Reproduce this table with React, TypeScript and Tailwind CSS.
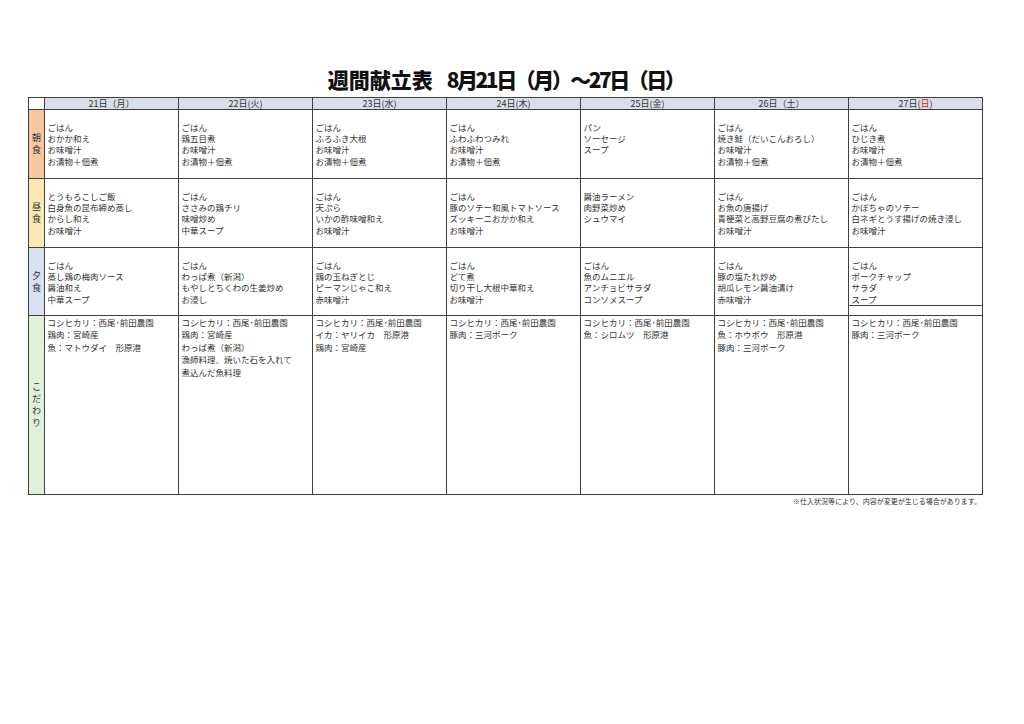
const days = [
  { d: '21日', w: '（月）' },
  { d: '22日', w: '(火)' },
  { d: '23日', w: '(水)' },
  { d: '24日', w: '(木)' },
  { d: '25日', w: '(金)' },
  { d: '26日', w: '（土）' },
  { d: '27日', w: '(日)', red: true },
];

const breakfast = [
  ['ごはん', 'おかか和え', 'お味噌汁', 'お漬物＋佃煮'],
  ['ごはん', '鶏五目煮', 'お味噌汁', 'お漬物＋佃煮'],
  ['ごはん', 'ふろふき大根', 'お味噌汁', 'お漬物＋佃煮'],
  ['ごはん', 'ふわふわつみれ', 'お味噌汁', 'お漬物＋佃煮'],
  ['パン', 'ソーセージ', 'スープ'],
  ['ごはん', '焼き鮭（だいこんおろし）', 'お味噌汁', 'お漬物＋佃煮'],
  ['ごはん', 'ひじき煮', 'お味噌汁', 'お漬物＋佃煮'],
];

const lunch = [
  ['とうもろこしご飯', '白身魚の昆布締め蒸し', 'からし和え', 'お味噌汁'],
  ['ごはん', 'ささみの鶏チリ', '味噌炒め', '中華スープ'],
  ['ごはん', '天ぷら', 'いかの酢味噌和え', 'お味噌汁'],
  ['ごはん', '豚のソテー和風トマトソース', 'ズッキーニおかか和え', 'お味噌汁'],
  ['醤油ラーメン', '肉野菜炒め', 'シュウマイ'],
  ['ごはん', 'お魚の唐揚げ', '青梗菜と高野豆腐の煮びたし', 'お味噌汁'],
  ['ごはん', 'かぼちゃのソテー', '白ネギとうす揚げの焼き浸し', 'お味噌汁'],
];

const dinner = [
  ['ごはん', '蒸し鶏の梅肉ソース', '醤油和え', '中華スープ'],
  ['ごはん', 'わっぱ煮（新潟）', 'もやしとちくわの生姜炒め', 'お浸し'],
  ['ごはん', '鶏の玉ねぎとじ', 'ピーマンじゃこ和え', '赤味噌汁'],
  ['ごはん', 'どて煮', '切り干し大根中華和え', 'お味噌汁'],
  ['ごはん', '魚のムニエル', 'アンチョビサラダ', 'コンソメスープ'],
  ['ごはん', '豚の塩たれ炒め', '胡瓜レモン醤油漬け', '赤味噌汁'],
  ['ごはん', 'ポークチャップ', 'サラダ', 'スープ'],
];

const kodawari = [
  ['コシヒカリ：西尾･前田農園', '鶏肉：宮崎産', '魚：マトウダイ　形原港'],
  ['コシヒカリ：西尾･前田農園', '鶏肉：宮崎産', 'わっぱ煮（新潟）', '漁師料理、焼いた石を入れて', '煮込んだ魚料理'],
  ['コシヒカリ：西尾･前田農園', 'イカ：ヤリイカ　形原港', '鶏肉：宮崎産'],
  ['コシヒカリ：西尾･前田農園', '豚肉：三河ポーク'],
  ['コシヒカリ：西尾･前田農園', '魚：シロムツ　形原港'],
  ['コシヒカリ：西尾･前田農園', '魚：ホウボウ　形原港', '豚肉：三河ポーク'],
  ['コシヒカリ：西尾･前田農園', '豚肉：三河ポーク'],
];

function Label({ chars, bg }: { chars: string[]; bg: string }) {
  return (
    <div className={`${bg} flex flex-col items-center justify-center text-[9px] leading-[12px] text-[#333]`}>
      {chars.map((c, i) => (
        <span key={i}>{c}</span>
      ))}
    </div>
  );
}

function MealCell({ lines, split }: { lines: string[]; split?: boolean }) {
  return (
    <div className="relative bg-white pt-[11.5px] pl-[2.5px] text-[8.5px] leading-[11.4px] text-[#333] whitespace-nowrap">
      {lines.map((l, i) => (
        <div key={i}>{l}</div>
      ))}
      {/* sunday dinner has an extra ruled line near the bottom */}
      {split && <div className="absolute left-0 right-0 bottom-[9px] h-px bg-[#3f3f3f]" />}
    </div>
  );
}

export default function App() {
  return (
    <div className="w-[1024px] h-[724px] bg-white font-['Noto_Sans_CJK_JP',sans-serif] text-[#333]">
      <div className="ml-[28px] w-[955px] pt-[67px]">
        <h1 className="text-center text-[21px] leading-[24px] font-black text-[#111]">
          週間献立表<span className="ml-[14px] tracking-[-2.5px]">8月21日（月）～27日（日）</span>
        </h1>

        <div className="mt-[6px] grid grid-cols-[15px_repeat(7,133px)] grid-rows-[11px_68px_68px_67px_178px] gap-px bg-[#3f3f3f] border border-[#3f3f3f]">
          {/* header */}
          <div className="bg-white" />
          {days.map((d) => (
            <div key={d.d} className="bg-[#d9dee8] flex items-center justify-center text-[9px] leading-[11px] text-[#333]">
              {d.d}
              {d.red ? (
                <span>
                  (<span className="text-[#e02020]">日</span>)
                </span>
              ) : (
                d.w
              )}
            </div>
          ))}

          {/* 朝食 */}
          <Label chars={['朝', '食']} bg="bg-[#f6c6a1]" />
          {breakfast.map((b, i) => (
            <MealCell key={i} lines={b} />
          ))}

          {/* 昼食 */}
          <Label chars={['昼', '食']} bg="bg-[#fce8b5]" />
          {lunch.map((b, i) => (
            <MealCell key={i} lines={b} />
          ))}

          {/* 夕食 */}
          <Label chars={['夕', '食']} bg="bg-[#d9e0f2]" />
          {dinner.map((b, i) => (
            <MealCell key={i} lines={b} split={i === 6} />
          ))}

          {/* こだわり */}
          <Label chars={['こ', 'だ', 'わ', 'り']} bg="bg-[#e2efda]" />
          {kodawari.map((k, i) => (
            <div key={i} className="bg-white pl-[2.5px] text-[8.5px] leading-[12.4px] text-[#333] whitespace-nowrap">
              {k.map((l, j) => (
                <div key={j}>{l}</div>
              ))}
            </div>
          ))}
        </div>

        <p className="mt-[1px] pr-[2px] text-right text-[7px] leading-[10px] text-[#333]">
          ※仕入状況等により、内容が変更が生じる場合があります。
        </p>
      </div>
    </div>
  );
}
